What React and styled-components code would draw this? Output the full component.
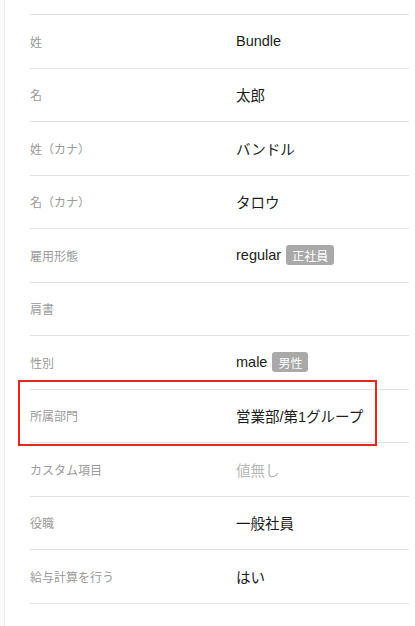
import styled, { createGlobalStyle } from "styled-components";

const GlobalStyles = createGlobalStyle`
  html, body {
    margin: 0;
    padding: 0;
    background: #fafafa;
    font-family: "Liberation Sans", "Noto Sans CJK JP", sans-serif;
  }
`;

const Page = styled.div`
  height: 626px;
  overflow: hidden;
  padding-left: 4px;
`;

const Card = styled.div`
  position: relative;
  background: #fff;
  border-left: 1px solid #ececec;
  border-bottom-left-radius: 6px;
  height: 622px;
  padding: 14px 6px 0 25px;
`;

const List = styled.dl`
  margin: 0;
  border-top: 1px solid #e2e2e2;
`;

const Row = styled.div`
  display: grid;
  grid-template-columns: 206px 1fr;
  align-items: center;
  height: 52.5px;
  border-bottom: 1px solid #e2e2e2;
`;

const Label = styled.dt`
  margin: 0;
  font-size: 12px;
  color: #9a9a9a;
  font-family: "Noto Sans CJK JP", sans-serif;
`;

const Value = styled.dd`
  margin: 0;
  display: flex;
  align-items: center;
  gap: 5px;
  font-size: 14.5px;
  color: ${(p) => (p.$empty ? "#b8b8b8" : "#1c1c1c")};
  font-family: "Liberation Sans", "Noto Sans CJK JP", sans-serif;
`;

const Badge = styled.span`
  display: inline-flex;
  align-items: center;
  height: 20px;
  padding: 0 6px;
  border-radius: 3px;
  background: #a9a9a9;
  color: #fff;
  font-size: 12px;
  font-family: "Noto Sans CJK JP", sans-serif;
`;

const Highlight = styled.div`
  position: absolute;
  left: 13px;
  top: 380px;
  width: 355px;
  height: 62px;
  border: 2px solid #f0231c;
  pointer-events: none;
`;

const rows = [
  { label: "姓", value: "Bundle" },
  { label: "名", value: "太郎" },
  { label: "姓（カナ）", value: "バンドル" },
  { label: "名（カナ）", value: "タロウ" },
  { label: "雇用形態", value: "regular", badge: "正社員" },
  { label: "肩書", value: "" },
  { label: "性別", value: "male", badge: "男性" },
  { label: "所属部門", value: "営業部/第1グループ" },
  { label: "カスタム項目", value: "値無し", empty: true },
  { label: "役職", value: "一般社員" },
  { label: "給与計算を行う", value: "はい" },
];

export default function App() {
  return (
    <>
      <GlobalStyles />
      <Page>
        <Card>
          <List>
            {rows.map((r) => (
              <Row key={r.label}>
                <Label>{r.label}</Label>
                <Value $empty={r.empty}>
                  {r.value}
                  {r.badge && <Badge>{r.badge}</Badge>}
                </Value>
              </Row>
            ))}
          </List>
          <Highlight />
        </Card>
      </Page>
    </>
  );
}
